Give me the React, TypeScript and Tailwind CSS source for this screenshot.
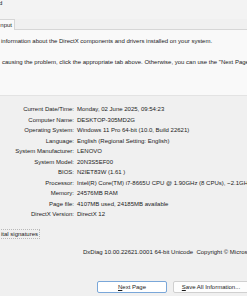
import React from "react";

const rows: [string, string][] = [
  ["Current Date/Time:", "Monday, 02 June 2025, 09:54:23"],
  ["Computer Name:", "DESKTOP-305MD2G"],
  ["Operating System:", "Windows 11 Pro 64-bit (10.0, Build 22621)"],
  ["Language:", "English (Regional Setting: English)"],
  ["System Manufacturer:", "LENOVO"],
  ["System Model:", "20N3S5EF00"],
  ["BIOS:", "N2IET83W (1.61 )"],
  ["Processor:", "Intel(R) Core(TM) i7-8665U CPU @ 1.90GHz (8 CPUs), ~2.1GHz"],
  ["Memory:", "24576MB RAM"],
  ["Page file:", "4107MB used, 24185MB available"],
  ["DirectX Version:", "DirectX 12"],
];

export default function App() {
  return (
    <div
      className="w-[247px] h-[296px] overflow-hidden bg-[#f0f0f0] text-[#1b1b1b] text-[6px] flex flex-col"
      style={{ fontFamily: '"Liberation Sans", Arial, sans-serif' }}
    >
      {/* ── Tabs ── */}
      <div className="h-[19px] bg-[#f3f3f3] leading-[7px] whitespace-nowrap">
        <span className="-ml-[1px]">d</span>
      </div>
      <div className="h-[11px] flex">
        <div className="w-[16px] -ml-px border border-b-0 border-[#d6d6d6] bg-[#f9f9f9] flex items-center justify-end pr-[2px] leading-none">
          nput
        </div>
        <div className="flex-1 border-b border-[#d6d6d6]" />
      </div>

      {/* ── Description ── */}
      <div className="bg-[#f9f9f9] pt-[6px] h-[65px] leading-[10px] whitespace-nowrap">
        <p className="pl-[1px]">information about the DirectX components and drivers installed on your system.</p>
        <p className="mt-[11px] pl-[2px]">causing the problem, click the appropriate tab above. Otherwise, you can use the "Next Page"</p>
      </div>

      {/* ── System Information ── */}
      <div className="border-t border-[#e3e3e3] pt-[8px] flex flex-col leading-[10.5px] whitespace-nowrap">
        {rows.map(([label, value]) => (
          <div key={label} className="flex gap-[3px]">
            <span className="w-[74px] shrink-0 text-right">{label}</span>
            <span>{value}</span>
          </div>
        ))}
      </div>

      {/* ── WHQL checkbox ── */}
      <div className="mt-[9px] flex">
        <span className="h-[10px] -ml-px pl-[1px] pr-[1px] border border-[#b8b8b8] border-dotted leading-[9px] whitespace-nowrap">
          ital signatures
        </span>
      </div>

      <p className="mt-[8px] pl-[83px] leading-[10px] whitespace-nowrap">
        DxDiag 10.00.22621.0001 64-bit Unicode&nbsp; Copyright © Micros
      </p>

      {/* ── Buttons ── */}
      <div className="mt-[24px] flex gap-[6px] pl-[97px]">
        <button
          type="button"
          className="w-[70px] h-[12px] shrink-0 bg-white border border-[#7aa7d9] rounded-[2px] leading-none"
        >
          <span className="underline">N</span>ext Page
        </button>
        <button
          type="button"
          className="w-[76px] h-[12px] shrink-0 bg-[#fdfdfd] border border-[#d0d0d0] rounded-[2px] leading-none whitespace-nowrap"
        >
          <span className="underline">S</span>ave All Information...
        </button>
      </div>
    </div>
  );
}
